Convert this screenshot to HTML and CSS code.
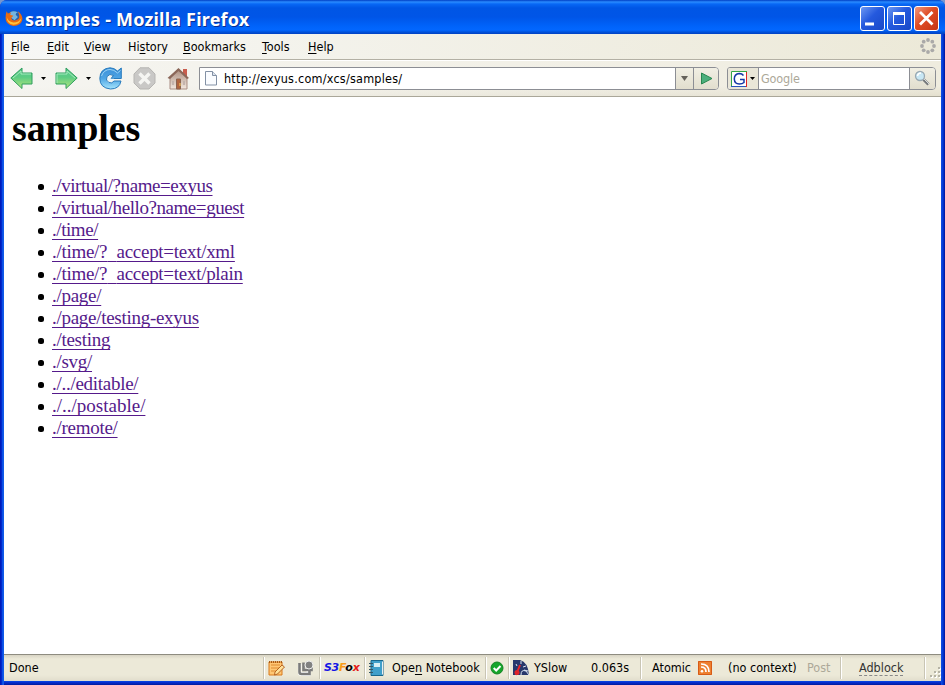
FILE: index.html
```html
<!DOCTYPE html>
<html lang="en">
<head>
<meta charset="utf-8">
<title>samples - Mozilla Firefox</title>
<link rel="stylesheet" href="styles.css">
</head>
<body>
<div class="window">
  <header class="titlebar">
    <svg class="fox" width="18" height="18" viewBox="0.500 0 16 16"><circle cx="8.5" cy="8" r="6.6" fill="#245fae"/><path d="M5 3q3-2 7 0-2 0-2 2l2 2-3 3-4-3z" fill="#75b5df"/><path d="M2 2l1 2 3-1-1 2 3 1-2 2q1 3 4 2 4-1 3-5l-1-3q4 3 4 7-1 6-8 6-7-1-7-7 0-4 1-6z" fill="#e96b12"/><path d="M2 7q1 4 6 5 5 0 7-4-1 6-7 6-6-1-6-7z" fill="#ffc13a"/></svg>
    <h1 class="title">samples - Mozilla Firefox</h1>
    <div class="controls">
      <span class="ctl"><svg width="23" height="23"><path d="M4 15.500h9v3h-9z" fill="#fff"/></svg></span>
      <span class="ctl"><svg width="23" height="23"><path d="M5.500 6v11.500h11V6" fill="none" stroke="#fff"/><path d="M5 5h12v3H5z" fill="#fff"/></svg></span>
      <span class="ctl close"><svg width="23" height="23"><path d="M5 5l12.500 12.500M17.500 5L5 17.500" stroke="#fff" stroke-width="2.800"/></svg></span>
    </div>
  </header>
  <div class="inner">
    <nav class="menu">
      <span class="m-file"><u>F</u>ile</span><span class="m-edit"><u>E</u>dit</span><span class="m-view"><u>V</u>iew</span><span class="m-hist">Hi<u>s</u>tory</span><span class="m-book"><u>B</u>ookmarks</span><span class="m-tool"><u>T</u>ools</span><span class="m-help"><u>H</u>elp</span>
      <svg class="throbber" width="16" height="16" fill="#aaa9a8"><circle cx="8" cy="2" r="1.900"/><circle cx="12.300" cy="3.700" r="1.900"/><circle cx="14" cy="8" r="1.900"/><circle cx="12.300" cy="12.300" r="1.900"/><circle cx="8" cy="14" r="1.900"/><circle cx="3.700" cy="12.300" r="1.900"/><circle cx="2" cy="8" r="1.900"/><circle cx="3.700" cy="3.700" r="1.900"/></svg>
    </nav>
    <div class="toolbar">
      <svg width="0" height="0" class="defs"><defs>
        <linearGradient id="green" x1="0" y1="0" x2="0" y2="1"><stop offset="0" stop-color="#55c98c"/><stop offset=".45" stop-color="#5ccc83"/><stop offset="1" stop-color="#b4e57c"/></linearGradient>
        <linearGradient id="blue" x1="0" y1="0" x2="0" y2="1"><stop offset="0" stop-color="#3c8fd8"/><stop offset=".5" stop-color="#4ea5e4"/><stop offset="1" stop-color="#a5e4fc"/></linearGradient>
        <linearGradient id="wall" x1="0" y1="0" x2="0" y2="1"><stop offset="0" stop-color="#a98b7c"/><stop offset="1" stop-color="#f3e8df"/></linearGradient>
      </defs></svg>
      <svg class="nav" width="23" height="23"><path d="M.8 11L12 1v5h10v11H12v4.500z" fill="url(#green)" stroke="#2f9e5e"/><path d="M3 11l8-7v3h10" fill="none" stroke="#a5e9bd"/></svg>
      <svg class="drop" width="5" height="3"><path d="M0 0h5L2.500 3z"/></svg>
      <svg class="nav forward" width="23" height="23"><path d="M22.200 11L11 1v5H1v11h10v4.500z" fill="url(#green)" stroke="#2f9e5e"/><path d="M2 16V7h10V4l8 7" fill="none" stroke="#a5e9bd"/></svg>
      <svg class="drop" width="5" height="3"><path d="M0 0h5L2.500 3z"/></svg>
      <svg class="nav reload" width="23" height="23"><path d="M18.500 4L22.300 1v10.500H12l2.500-3q-4-2.500-6.500 1-2 4 2 6 3 1.500 5-1.500h7q-1.500 8-10.500 8Q1 21 .8 11.500 1 1.500 11 .8q4 0 7.500 3.200z" fill="url(#blue)" stroke="#287bbd"/><path d="M2.500 9Q5 2.500 11 2.500q4 0 7.500 3.500l3-2.500" fill="none" stroke="#9bd4f5"/><path d="M15 12.500H10V9" fill="none" stroke="#e8f7ff" stroke-width="1.500"/></svg>
      <svg class="nav stop" width="23" height="23"><path d="M7 .8h9L22 7v9l-6 6H7L1 16V7z" fill="#c9c8c6" stroke="#b6b5b2"/><path d="M6.500 6.500l10 10M16.500 6.500l-10 10" stroke="#f5f5f2" stroke-width="3.400"/></svg>
      <svg class="nav home" width="23" height="23"><path d="M16 2h4v8h-4z" fill="#c95d4d"/><path d="M3 10l8-8 9 8v12H3z" fill="url(#wall)" stroke="#a98d82"/><path d="M.5 11L11.500 1l10.500 10-2 1-8.500-8L3 12z" fill="#8b6759"/><path d="M9.500 12h4v10h-4z" fill="#b0643f" stroke="#8b6450"/><path d="M5 14h2v4H5zM16 14h2v4h-2z" fill="#c4b4ad"/><path d="M13 16v3" stroke="#ffd05d"/></svg>
      <div class="urlbar">
        <svg class="page" width="12" height="15"><path d="M.5.500h7l4 4v9.500H.5z" fill="#fafcff" stroke="#8391a5"/><path d="M7.500.500v4h4" fill="#dce3ed" stroke="#8391a5"/></svg>
        <span class="address">http://exyus.com/xcs/samples/</span>
        <span class="cell history"><svg width="7" height="5"><path d="M0 0h7L3.500 5z" fill="#65625b"/></svg></span>
        <span class="cell go"><svg width="13" height="13"><path d="M1.500 1l10.500 5.500L1.500 12z" fill="#4caf7c" stroke="#278650"/></svg></span>
      </div>
      <div class="search">
        <span class="engine"><svg width="16" height="16"><path fill="#fff" d="M0 0h16v16H0z"/><path d="M.5 16V.500H16" fill="none" stroke="#35a646"/><path d="M15.500 1v15" stroke="#e22626"/><path d="M0 15.500h15" stroke="#2956bd"/><path d="M12.500 4.500Q11 2.500 8.300 2.500 3.300 3 3.300 8q.2 5 5 5 3 0 4.700-1.500V8.500H9" fill="none" stroke="#1638a6" stroke-width="1.500"/></svg><svg width="5" height="3"><path d="M0 0h5L2.500 3z"/></svg></span>
        <span class="query">Google</span>
        <span class="cell find"><svg width="17" height="17"><path d="M9.500 9.500l5 5" stroke="#777a7c" stroke-width="3"/><path d="M10 9l5 5" stroke="#d9dcdd"/><circle cx="6" cy="6" r="4.500" fill="#c8e7f4" stroke="#9aa9b2" stroke-width="1.300"/><path d="M3.500 6Q4 3 7 3" stroke="#fff" fill="none" stroke-width="1.500"/></svg></span>
      </div>
    </div>
    <main class="content">
      <h2>samples</h2>
      <ul>
        <li class="tight"><a>./virtual/?name=exyus</a></li>
        <li class="tight"><a>./virtual/hello?name=guest</a></li>
        <li class="tight"><a>./time/</a></li>
        <li><a>./time/?<span class="low">_</span>accept=text/xml</a></li>
        <li><a>./time/?<span class="low">_</span>accept=text/plain</a></li>
        <li><a>./page/</a></li>
        <li><a>./page/testing-exyus</a></li>
        <li><a>./testing</a></li>
        <li><a>./svg/</a></li>
        <li><a>./../editable/</a></li>
        <li class="wide"><a>./../postable/</a></li>
        <li><a>./remote/</a></li>
      </ul>
    </main>
    <footer class="status">
      <div class="done"><span>Done</span></div>
      <div class="tools">
        <svg width="17" height="17"><path d="M1 2h13v13H1z" fill="#ffc775" stroke="#d9781b"/><path d="M1 2h13" stroke="#a95b15" stroke-width="2" stroke-dasharray="1 1"/><path d="M3 5h9M3 8h8M3 11h5" stroke="#de8b32"/><path d="M7 12l7-7 2.500 2-7 7-3 1z" fill="#ffe19a" stroke="#b56424"/></svg>
        <svg width="16" height="16"><path d="M1.500 4v8q0 2 2 2h7v-3" fill="none" stroke="#fff" stroke-width="4"/><path d="M1.500 3v9q0 2 2 2h8v-3M5.500 2.500V10h8V7" fill="none" stroke="#7b7b7b" stroke-width="2.600"/><circle cx="11" cy="5" r="4" fill="#818181" stroke="#eee"/></svg>
      </div>
      <div class="s3"><span><b class="blue">S3</b><b class="orange">F</b><b>o</b><b class="red">x</b></span></div>
      <div class="notebook"><svg width="16" height="16"><path d="M2 .5h12v15H2z" fill="#3f9fca" stroke="#17678c"/><path d="M13.500 1.500v13" stroke="#e7edf0"/><path d="M5 3h6v4H5z" fill="#d6eef5"/><path d="M0 3.500h4m-4 3h4m-4 3h4m-4 3h4" stroke="#345667"/></svg><span>Ope<u>n</u> Notebook</span></div>
      <div class="ok"><svg width="14" height="14"><circle cx="7" cy="7" r="6" fill="#15a52b" stroke="#128322"/><path d="M3.700 7l2.500 2.500 4.300-4.500" stroke="#fff" stroke-width="2" fill="none"/></svg></div>
      <div class="yslow"><svg width="16" height="16"><path d="M0 0h7q8 2 9 15H0z" fill="#27386b"/><path d="M3 4l1 2m4-5v3m5 2l-3 1m5 4l-4-1M8 15q0-6 5-4l3 4" stroke="#dbe5f3" fill="none"/><path d="M3 15L7 5" stroke="#ee2225" stroke-width="2"/><circle cx="4" cy="12.500" r="2.500" fill="#df2429"/></svg><span class="yname">YSlow</span><span class="time">0.063s</span></div>
      <div class="atomic"><span class="aname">Atomic</span><svg width="14" height="14"><rect width="14" height="14" rx="1" fill="#ed8030"/><path d="M.5.500h13v13H.5z" fill="none" stroke="#d75b16"/><path d="M3 3q8 0 8 8M3 6q5 0 5 5" fill="none" stroke="#fff" stroke-width="1.700"/><circle cx="4" cy="10.300" r="1.300" fill="#fff"/></svg><span class="context">(no context)</span><span class="post">Post</span></div>
      <div class="adblock"><span>Adblock</span></div>
      <div class="grip"><svg width="12" height="12"><path d="M9 1h2v2H9zM5 5h2v2H5zM9 5h2v2H9zM1 9h2v2H1zM5 9h2v2H5zM9 9h2v2H9z" fill="#fff"/><path d="M8 0h2v2H8zM4 4h2v2H4zM8 4h2v2H8zM0 8h2v2H0zM4 8h2v2H4zM8 8h2v2H8z" fill="#b5b3a5"/></svg></div>
    </footer>
  </div>
</div>
</body>
</html>
```

FILE: styles.css
```css
* { box-sizing: border-box; }
body { margin: 0; background: #7696cf; font: 12.5px/16px "DejaVu Sans Condensed", "DejaVu Sans", sans-serif; color: #000; overflow: hidden; }
svg { display: block; flex: none; }
u { text-underline-offset: 2px; text-decoration-thickness: 1px; }
.window { width: 945px; height: 685px; border-radius: 7px 7px 0 0; background: linear-gradient(90deg, #001bbb 0 1px, #0038db 2px, #1765f0 3px, #0850df 4px, transparent 4px 941px, #1250e3 941px, #0038d5 943px, #00139b 945px), linear-gradient(#0850e5 681px, #0831d9 682px, #001b9d 685px); overflow: hidden; }
.titlebar { height: 34px; display: flex; align-items: center; padding: 3px 6px 0 5px; background: linear-gradient(#003ec4 0, #2a8bff 2px, #0868f5 4px, #0056e5 8px, #0055e7 17px, #0063fa 26px, #0267ff 30px, #0052db 32px, #0040c2 34px); }
.fox { margin-top: -2px; }
.title { margin: 0 0 0 2px; font: bold 18px/24px "Noto Sans", sans-serif; letter-spacing: .2px; color: #fff; text-shadow: 1px 1px #092f93; white-space: nowrap; }
.controls { display: flex; gap: 2px; margin: 0 0 0 auto; }
.ctl { width: 25px; height: 25px; border: 1px solid #fff; border-radius: 3px; background: linear-gradient(135deg, #6d98f2, #2459de 45%, #1948c7); overflow: hidden; }
.close { background: linear-gradient(135deg, #ef987e, #df4c25 45%, #c53412); }
.inner { width: 937px; height: 647px; margin-left: 4px; display: flex; flex-direction: column; background: #fff; }
.menu { height: 26px; flex: none; display: flex; align-items: center; padding-left: 7px; background: linear-gradient(90deg, #f7f7f5, #ece9d8); border-bottom: 1px solid #b3b0a4; }
.menu span { white-space: nowrap; }
.m-file { width: 36px; } .m-edit { width: 37px; } .m-view { width: 44px; } .m-hist { width: 55px; } .m-book { width: 79px; } .m-tool { width: 46px; }
.throbber { margin: -2px 5px 0 auto; }
.toolbar { height: 37px; flex: none; display: flex; align-items: center; padding-left: 6px; border-top: 1px solid #fff; border-bottom: 1px solid #aaa799; background: linear-gradient(90deg, rgba(247,247,245,.8), rgba(236,233,216,0)), linear-gradient(#efecdf 25px, #e4e0cf); }
.defs { position: absolute; }
.drop { margin-left: 8px; }
.forward { margin-left: 9px; }
.reload { margin-left: 8px; }
.stop, .home { margin-left: 11px; }
.urlbar { width: 520px; height: 23px; margin-left: 9px; display: flex; align-items: center; border: 1px solid #8c8e94; border-radius: 0 4px 4px 0; background: #fff; overflow: hidden; }
.page { margin-left: 5px; }
.address { margin-left: 7px; letter-spacing: .23px; }
.cell { height: 21px; display: flex; align-items: center; justify-content: center; border-left: 1px solid #8c8e94; background: linear-gradient(#f1efe4, #e2dece); }
.history { width: 18px; margin-left: auto; }
.go { width: 25px; }
.search { width: 209px; height: 23px; margin-left: 8px; display: flex; align-items: center; border: 1px solid #8c8e94; border-radius: 3px 4px 4px 3px; background: #fff; overflow: hidden; }
.engine { width: 31px; height: 21px; padding-left: 3px; display: flex; align-items: center; gap: 3px; border-right: 1px solid #8c8e94; background: #e9e6d8; }
.query { margin-left: 2px; color: #aca899; letter-spacing: -.15px; }
.find { width: 26px; margin-left: auto; }
.content { flex: 1; padding: 9px 8px; font-family: "Liberation Serif", serif; }
.content h2 { margin: 0; font: bold 38px/44px "Liberation Serif", serif; letter-spacing: -.1px; }
.content ul { margin: 25px 0 0; padding: 0 0 0 40px; list-style: none; font-size: 19px; line-height: 22px; letter-spacing: -.28px; }
.content .tight { letter-spacing: -.43px; }
.content .wide { letter-spacing: 0; }
.content li { height: 22px; position: relative; }
.content li::before { content: ""; position: absolute; left: -14px; top: 9px; width: 6px; height: 6px; border-radius: 2.500px; background: #000; }
.content a { color: #551a8b; text-decoration: underline; text-decoration-thickness: 1px; text-underline-offset: 3px; text-decoration-skip-ink: none; white-space: nowrap; }
.low { color: transparent; }
.status { height: 27px; flex: none; display: flex; border-top: 1px solid #8e8c80; background: linear-gradient(#d8d4c4, #ece9d8 4px 20px, #e1ddcc); }
.status > div { height: 22px; margin-top: 2px; display: flex; align-items: center; border-left: 1px solid #c9c5b4; box-shadow: inset 1px 0 #fff; white-space: nowrap; }
.status > .done { width: 259px; padding-left: 5px; border: 0; box-shadow: none; }
.tools { width: 56px; padding-left: 4px; gap: 13px; }
.s3 { width: 45px; padding-left: 4px; font: italic bold 11px/16px "DejaVu Sans", sans-serif; letter-spacing: -.3px; }
.blue { color: #1515e5; } .orange { color: #f99b18; } .red { color: #e51b19; }
.notebook { width: 121px; padding-left: 4px; gap: 7px; }
.ok { width: 23px; padding-left: 4px; }
.yslow { width: 132px; padding-left: 4px; }
.yname { width: 57px; margin-left: 5px; }
.status > .atomic { width: 200px; padding-left: 11px; }
.aname { width: 46px; }
.context { margin-left: 16px; width: 79px; }
.post { color: #aca899; }
.status > .adblock { width: 84px; padding-left: 18px; }
.adblock span { border-bottom: 1px dashed #888; line-height: 15px; color: #333; }
.grip { width: 17px; padding: 9px 0 0 5px; }
```
